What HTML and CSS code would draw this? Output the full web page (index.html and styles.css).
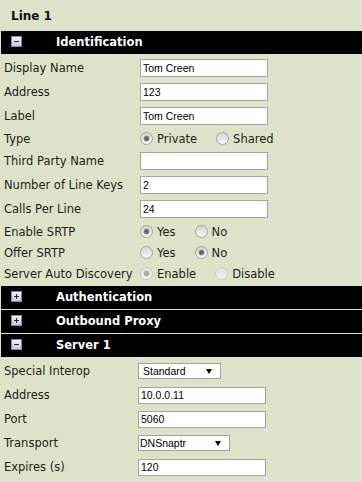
FILE: index.html
```html
<!DOCTYPE html>
<html lang="en">
<head>
<meta charset="utf-8">
<title>Line 1</title>
<link rel="stylesheet" href="styles.css">
</head>
<body>
<div class="page">
  <h1 class="page-title">Line 1</h1>

  <section class="panel">
    <div class="panel-bar"><span class="toggle toggle--minus"></span><span class="panel-title">Identification</span></div>
    <div class="panel-body">
      <div class="row"><span class="row-label">Display Name</span><input class="text" type="text" value="Tom Creen"></div>
      <div class="row"><span class="row-label">Address</span><input class="text" type="text" value="123"></div>
      <div class="row"><span class="row-label">Label</span><input class="text" type="text" value="Tom Creen"></div>
      <div class="row row--radio"><span class="row-label">Type</span>
        <label class="option"><input class="radio" type="radio" name="type" checked>Private</label>
        <label class="option"><input class="radio" type="radio" name="type">Shared</label>
      </div>
      <div class="row"><span class="row-label">Third Party Name</span><input class="text" type="text" value=""></div>
      <div class="row"><span class="row-label">Number of Line Keys</span><input class="text" type="text" value="2"></div>
      <div class="row"><span class="row-label">Calls Per Line</span><input class="text" type="text" value="24"></div>
      <div class="row row--radio"><span class="row-label">Enable SRTP</span>
        <label class="option"><input class="radio" type="radio" name="esrtp" checked>Yes</label>
        <label class="option"><input class="radio" type="radio" name="esrtp">No</label>
      </div>
      <div class="row row--radio"><span class="row-label">Offer SRTP</span>
        <label class="option"><input class="radio" type="radio" name="osrtp">Yes</label>
        <label class="option"><input class="radio" type="radio" name="osrtp" checked>No</label>
      </div>
      <div class="row row--radio"><span class="row-label">Server Auto Discovery</span>
        <label class="option"><input class="radio" type="radio" name="sad" checked disabled>Enable</label>
        <label class="option"><input class="radio" type="radio" name="sad" disabled>Disable</label>
      </div>
    </div>
  </section>

  <section class="panel">
    <div class="panel-bar"><span class="toggle toggle--plus"></span><span class="panel-title">Authentication</span></div>
  </section>

  <section class="panel">
    <div class="panel-bar"><span class="toggle toggle--plus"></span><span class="panel-title">Outbound Proxy</span></div>
  </section>

  <section class="panel panel--server">
    <div class="panel-bar"><span class="toggle toggle--minus"></span><span class="panel-title">Server 1</span></div>
    <div class="panel-body">
      <div class="row"><span class="row-label">Special Interop</span>
        <span class="select select--interop"><select><option>Standard</option></select><span class="select-arrow"></span></span>
      </div>
      <div class="row"><span class="row-label">Address</span><input class="text" type="text" value="10.0.0.11"></div>
      <div class="row"><span class="row-label">Port</span><input class="text" type="text" value="5060"></div>
      <div class="row"><span class="row-label">Transport</span>
        <span class="select select--transport"><select><option>DNSnaptr</option></select><span class="select-arrow"></span></span>
      </div>
      <div class="row"><span class="row-label">Expires (s)</span><input class="text" type="text" value="120"></div>
    </div>
  </section>
</div>
</body>
</html>
```

FILE: styles.css
```css
html, body {
  margin: 0;
  padding: 0;
}

body {
  background: #dee2c8;
  color: #1e1e1e;
  font-family: "DejaVu Sans", Verdana, sans-serif;
  font-size: 11.5px;
}

.page {
  padding-left: 1px;
}

.page-title {
  margin: 0;
  padding: 1px 0 0 10px;
  height: 30px;
  line-height: 30px;
  font-size: 12px;
  font-weight: bold;
  color: #111;
}

.panel + .panel {
  margin-top: 1px;
}

.panel-bar {
  display: flex;
  height: 23px;
  background: #000;
  color: #fff;
  padding-left: 10px;
}

.toggle {
  position: relative;
  flex: none;
  width: 11px;
  height: 11px;
  margin-top: 5px;
  box-sizing: border-box;
  border: 1px solid #7f8aa6;
  background: linear-gradient(#f3f5fa, #c4cbdc);
}

.toggle::before,
.toggle::after {
  content: "";
  position: absolute;
  background: #1f2638;
}

.toggle::before {
  left: 2px;
  top: 4px;
  width: 5px;
  height: 1px;
}

.toggle--plus::after {
  left: 4px;
  top: 2px;
  width: 1px;
  height: 5px;
}

.panel-title {
  margin-left: 34px;
  line-height: 23px;
  font-weight: bold;
  font-size: 11.5px;
}

.panel-body {
  padding: 2px 0 1px;
}

.row {
  display: flex;
  align-items: center;
  height: 24px;
}

.row--radio {
  height: 21px;
}

.row-label {
  flex: none;
  width: 136px;
  padding-left: 3px;
  white-space: nowrap;
}

.panel--server .row-label {
  width: 134px;
}

.text {
  width: 128px;
  height: 18px;
  margin: 0;
  box-sizing: border-box;
  border: 1px solid #a3a3a3;
  padding: 0 2px;
  background: #fff;
  color: #000;
  font-family: "Liberation Sans", Arial, sans-serif;
  font-size: 10.5px;
  outline: none;
}

.panel--server .text {
  height: 17px;
}

.option {
  display: inline-flex;
  align-items: center;
  margin-right: 19px;
}

.radio {
  -webkit-appearance: none;
  appearance: none;
  width: 13px;
  height: 13px;
  margin: 0 4px 0 0;
  box-sizing: border-box;
  border: 1px solid #a2a2a2;
  border-radius: 50%;
  background: linear-gradient(#d5d5d5, #f6f6f6);
}

.radio:checked {
  background:
    radial-gradient(circle at center, #555 0, #6e6e6e 1.6px, #8a8a8a 2.6px, rgba(138,138,138,0) 3.3px),
    linear-gradient(#d5d5d5, #f6f6f6);
}

.radio:disabled {
  border-color: #c9c9c9;
  background: linear-gradient(#e2e2e2, #f1f1f1);
}

.radio:disabled:checked {
  background:
    radial-gradient(circle at center, #a0a0a0 0, #aaa 1.6px, #b5b5b5 2.6px, rgba(181,181,181,0) 3.3px),
    linear-gradient(#e2e2e2, #f1f1f1);
}

.select {
  display: inline-flex;
  align-items: center;
  height: 16px;
  box-sizing: border-box;
  border: 1px solid #a3a3a3;
  background: #fff;
}

.select select {
  -webkit-appearance: none;
  appearance: none;
  flex: 1;
  min-width: 0;
  height: 100%;
  margin: 0;
  border: 0;
  padding: 0;
  background: transparent;
  color: #000;
  font-family: "Liberation Sans", Arial, sans-serif;
  font-size: 10.5px;
  outline: none;
}

.select--interop {
  width: 83px;
}

.select--interop select {
  padding-left: 4px;
}

.select--transport {
  width: 92px;
}

.select--transport select {
  padding-left: 1px;
}

.select-arrow {
  flex: none;
  width: 0;
  height: 0;
  margin: 0 8px 0 2px;
  border-left: 3px solid transparent;
  border-right: 3px solid transparent;
  border-top: 5px solid #000;
}
```
